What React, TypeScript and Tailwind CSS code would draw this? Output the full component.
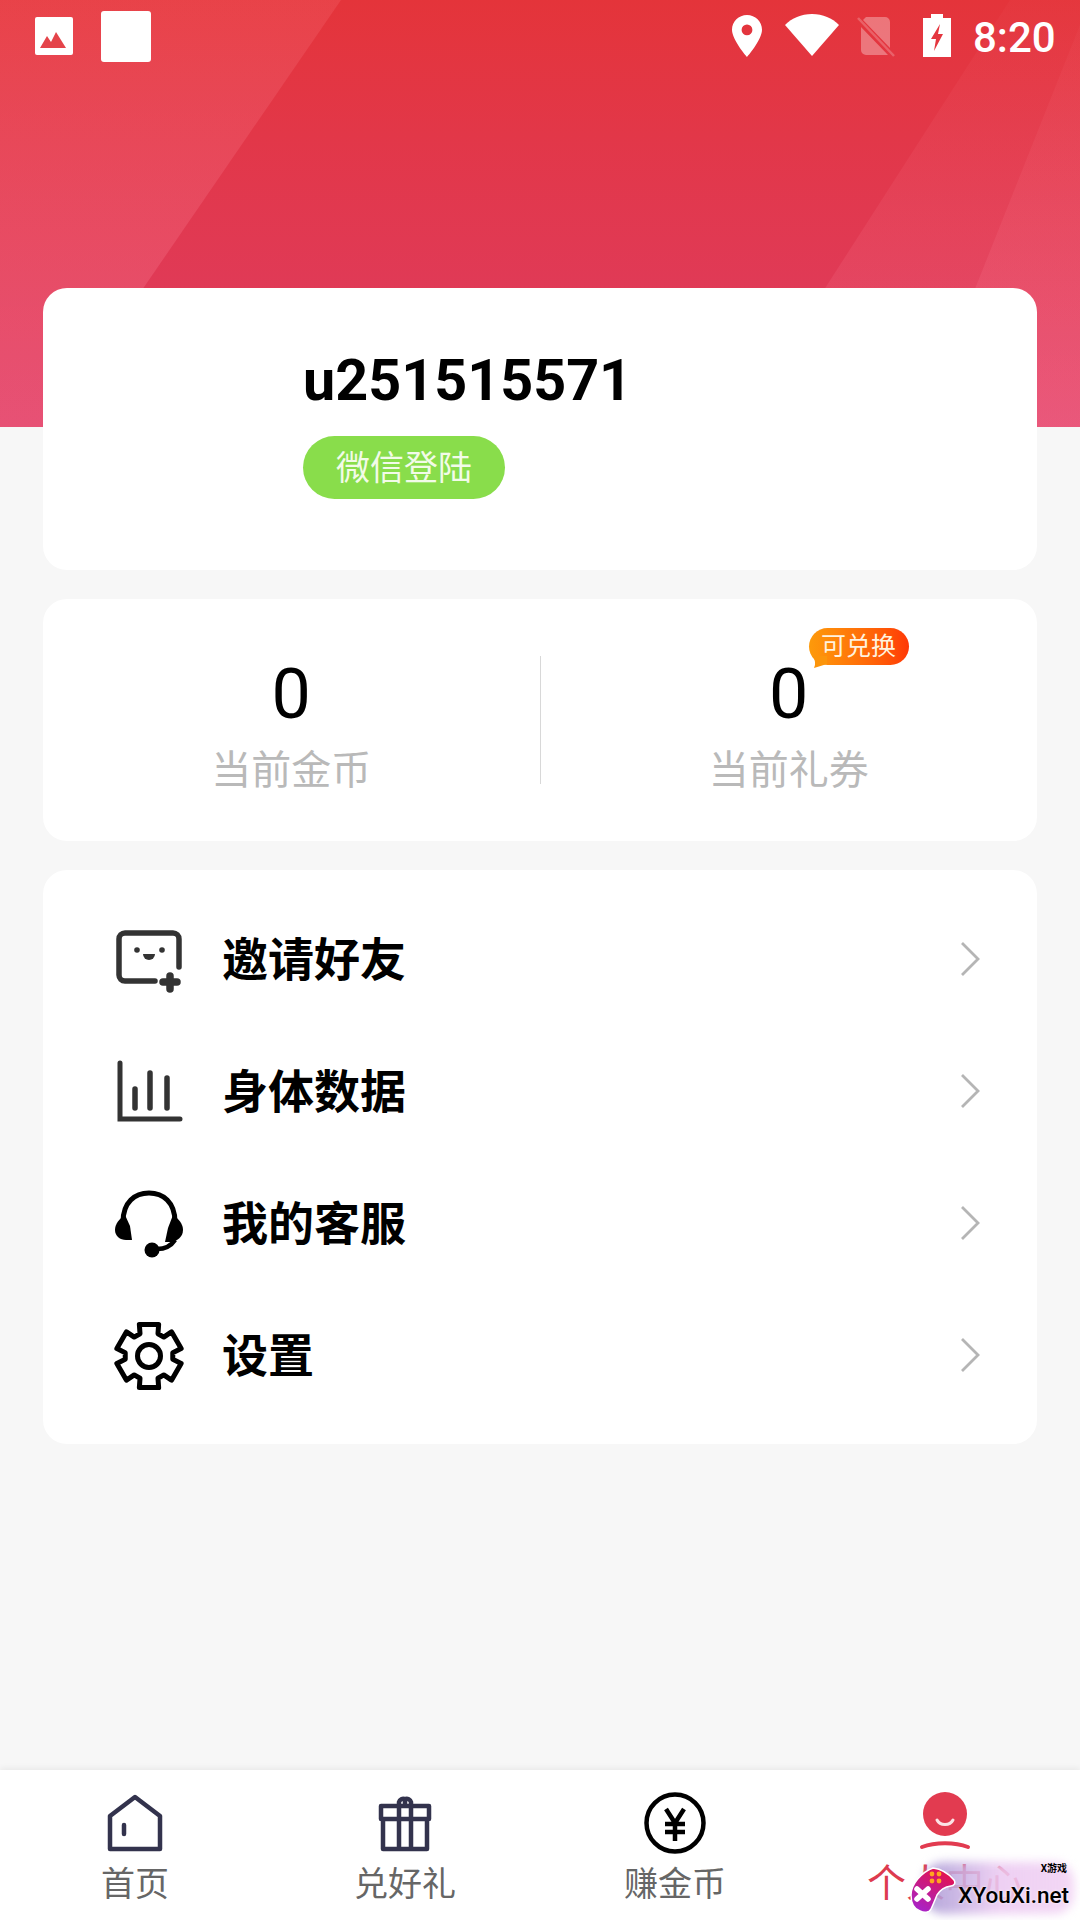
import React from 'react';

const gearPath = () => {
    const pt = (r: number, deg: number) => {
        const a = (deg * Math.PI) / 180;
        return `${(36 + r * Math.cos(a)).toFixed(2)} ${(36 + r * Math.sin(a)).toFixed(2)}`;
    };
    let d = '';
    for (let i = 0; i < 6; i++) {
        const a = i * 60 - 90;
        d += `${i === 0 ? 'M' : 'L'}${pt(24, a - 22)} L${pt(33, a - 17)} L${pt(33, a + 17)} L${pt(24, a + 22)} `;
    }
    return d + 'Z';
};

const InviteIcon = () => (
    <svg width="72" height="72" viewBox="0 0 72 72" fill="none">
        <path d="M66 43V15a6 6 0 0 0-6-6H12a6 6 0 0 0-6 6v36a6 6 0 0 0 6 6h30" stroke="#333" strokeWidth="5.5" strokeLinecap="round" />
        <circle cx="24" cy="26" r="2.8" fill="#333" />
        <circle cx="49" cy="26" r="2.8" fill="#333" />
        <path d="M30 30h12a6 6 0 0 1-12 0z" fill="#333" />
        <path d="M57 52v13M50 58h14" stroke="#333" strokeWidth="7.5" strokeLinecap="round" />
    </svg>
);

const ChartIcon = () => (
    <svg width="72" height="72" viewBox="0 0 72 72" fill="none" stroke="#333" strokeLinecap="round">
        <path d="M7 7v56h60" strokeWidth="5" />
        <path d="M22 33v19M37 17v35M54 22v30" strokeWidth="5.5" />
    </svg>
);

const HeadsetIcon = () => (
    <svg width="72" height="72" viewBox="0 0 72 72" fill="none">
        <path d="M10 34C10 14 22 5 36 5s26 9 26 29" stroke="#000" strokeWidth="5" />
        <path d="M12 27c-6 4-10 9-10 15 0 6 5 10 11 10h6l-2-14z" fill="#000" />
        <path d="M60 27c6 4 10 9 10 15 0 7-6 11-11 12h-7l3-14z" fill="#000" />
        <path d="M44 61c8 0 14-3 18-9" stroke="#000" strokeWidth="4.5" />
        <circle cx="39" cy="62" r="7.5" fill="#000" />
    </svg>
);

const GearIcon = () => (
    <svg width="72" height="72" viewBox="0 0 72 72" fill="none" stroke="#000">
        <path d={gearPath()} strokeWidth="5" strokeLinejoin="round" />
        <circle cx="36" cy="36" r="11.5" strokeWidth="5" />
    </svg>
);

const Chevron = () => (
    <svg width="20" height="36" viewBox="0 0 20 36" fill="none" className="ml-auto -mt-[2px]">
        <path d="M2 2l16 16L2 34" stroke="#b5b5b5" strokeWidth="2.8" />
    </svg>
);

const menu = [
    { label: '邀请好友', icon: <InviteIcon /> },
    { label: '身体数据', icon: <ChartIcon /> },
    { label: '我的客服', icon: <HeadsetIcon /> },
    { label: '设置', icon: <GearIcon /> },
];

const StatusBar = () => (
    <div className="relative flex h-[72px] items-start">
        <svg width="38" height="38" viewBox="0 0 38 38" className="ml-[35px] mt-[17px]">
            <rect width="38" height="38" rx="2" fill="#fff" />
            <path d="M5 31l7-12 4 6 5-10 10 16z" fill="#e4444a" />
        </svg>
        <div className="ml-[28px] mt-[11px] h-[51px] w-[50px] rounded-[3px] bg-white" />
        <svg width="30" height="42" viewBox="0 0 30 42" className="ml-[581px] mt-[15px]">
            <path fillRule="evenodd" d="M15 0c8.3 0 15 6.6 15 14.8C30 25 15 42 15 42S0 25 0 14.8C0 6.6 6.7 0 15 0zm0 9.5a5.4 5.4 0 1 0 0 10.8 5.4 5.4 0 0 0 0-10.8z" fill="#fff" />
        </svg>
        <svg width="54" height="42" viewBox="0 0 54 42" className="ml-[23px] mt-[14px]">
            <path d="M27 42L0 11C7 4 16 0 27 0s20 4 27 11z" fill="#fff" />
        </svg>
        <svg width="40" height="42" viewBox="0 0 40 42" className="ml-[18px] mt-[15px]">
            <path d="M9 2h19a5 5 0 0 1 5 5v26L6 5l3-3zM4 12l27 28H9a5 5 0 0 1-5-5z" fill="#fff" fillOpacity="0.32" />
            <path d="M1 3l36 38" stroke="#fff" strokeOpacity="0.22" strokeWidth="2.5" />
        </svg>
        <svg width="28" height="43" viewBox="0 0 28 43" className="ml-[26px] mt-[14px]">
            <path d="M8 0h12v4h8v39H0V4h8z" fill="#fff" />
            <path d="M17 10l-9 15h5l-2 12 9-17h-5z" fill="#e4363f" />
        </svg>
        <span className="ml-[22px] mt-[13px] text-[42px] font-medium leading-[50px] text-white">8:20</span>
    </div>
);

const Tab = ({ label, icon, active }: { label: string; icon: React.ReactNode; active?: boolean }) => (
    <div className="flex flex-1 flex-col items-center">
        <div className="flex h-[66px] items-center">{icon}</div>
        <span className={active ? 'mt-[6px] text-[39px] leading-[44px] text-[#dd3b4f]' : 'mt-[6px] text-[34px] leading-[44px] text-[#666]'}>{label}</span>
    </div>
);

const Watermark = () => (
    <div className="absolute bottom-[4px] right-[4px] h-[56px] w-[166px]">
        <div className="absolute bottom-[2px] left-[14px] right-[2px] top-[2px] rounded-[20px] bg-linear-to-r from-[#a596d2]/85 via-[#eccbf2]/90 to-[#f0cdf2]/80 blur-[5px]" />
        <svg width="46" height="46" viewBox="0 0 46 46" className="absolute left-0 top-[7px]">
            <defs>
                <linearGradient id="wm" x1="0.7" y1="0" x2="0.2" y2="1">
                    <stop offset="0" stopColor="#e5124a" />
                    <stop offset="1" stopColor="#a624cc" />
                </linearGradient>
            </defs>
            <path d="M23 1c8 1 16 6 21 12 2 3 0 6-3 6-7 1-11 4-14 9-2 5-4 10-6 14-2 4-7 4-11 2C4 42 1 36 1 28 1 17 12 5 23 1z" fill="url(#wm)" stroke="#fff" strokeWidth="1.5" />
            <path d="M7 22l11 10M18 22L7 32" stroke="#fff" strokeWidth="5.5" strokeLinecap="round" />
            <circle cx="22" cy="7" r="2.4" fill="#ffa51f" />
            <circle cx="29" cy="7" r="2.4" fill="#ffa51f" />
            <circle cx="22" cy="14" r="2.4" fill="#ffa51f" />
            <circle cx="29" cy="14" r="2.4" fill="#ffa51f" />
        </svg>
        <span className="absolute right-[9px] top-[3px] text-[10px] font-bold leading-[12px] text-black">X游戏</span>
        <span className="absolute right-[7px] top-[21px] text-[22.5px] font-medium leading-[28px] text-black [text-shadow:0_0_3px_#fff]">XYouXi.net</span>
    </div>
);

const App = () => {
    return (
        <div className="relative flex h-[1920px] w-[1080px] flex-col overflow-hidden bg-[#f7f7f7] font-['Roboto','Noto_Sans_CJK_SC',sans-serif]">
            <div className="relative h-[427px] shrink-0 bg-linear-to-b from-[#e4343a] to-[#de3c62]">
                <svg width="1080" height="427" viewBox="0 0 1080 427" className="absolute inset-0">
                    <defs>
                        <linearGradient id="left" x1="0" y1="0" x2="0" y2="1">
                            <stop offset="0" stopColor="#ff8a90" stopOpacity="0.17" />
                            <stop offset="1" stopColor="#ff8aa8" stopOpacity="0.27" />
                        </linearGradient>
                        <linearGradient id="right" x1="0" y1="0" x2="0" y2="1">
                            <stop offset="0" stopColor="#ff8a90" stopOpacity="0.04" />
                            <stop offset="1" stopColor="#ff8aa8" stopOpacity="0.2" />
                        </linearGradient>
                    </defs>
                    <path d="M0 0H341L48 427H0z" fill="url(#left)" />
                    <path d="M1010 0H1080V427H736z" fill="url(#right)" />
                    <path d="M1090 0H1080V427H920z" fill="url(#right)" />
                </svg>
                <StatusBar />
            </div>

            <div className="relative mt-[-139px] flex flex-col gap-[29px] px-[43px]">
                <div className="flex h-[282px] flex-col items-start rounded-[24px] bg-white pl-[260px] pt-[60px]">
                    <div className="text-[57.5px] font-bold leading-[66px] text-black">u251515571</div>
                    <div className="mt-[22px] flex h-[63px] w-[202px] items-center justify-center rounded-full bg-[#89dd4b] text-[34px] leading-none text-[#f2fbe8]">微信登陆</div>
                </div>

                <div className="flex h-[242px] items-center rounded-[24px] bg-white pt-[6px]">
                    <div className="flex flex-1 flex-col items-center">
                        <div className="text-[70px] leading-[82px] text-black">0</div>
                        <div className="mt-[13px] text-[40px] leading-[46px] text-[#b9b9b9]">当前金币</div>
                    </div>
                    <div className="-mt-[6px] h-[128px] w-px bg-[#d8d8d8]" />
                    <div className="relative flex flex-1 flex-col items-center">
                        <div className="text-[70px] leading-[82px] text-black">0</div>
                        <div className="mt-[13px] text-[40px] leading-[46px] text-[#b9b9b9]">当前礼券</div>
                        <div className="absolute left-[268px] top-[-25px] flex h-[37px] w-[100px] items-center justify-center rounded-full bg-linear-to-r from-[#fd9a0b] to-[#ff3706] text-[25px] leading-none text-[#fff2de]">
                            可兑换
                            <svg width="14" height="12" viewBox="0 0 14 12" className="absolute bottom-[-3px] left-[4px]">
                                <path d="M0 0h14v8L1 12c2-4 1-8-1-12z" fill="#fc950b" />
                            </svg>
                        </div>
                    </div>
                </div>

                <div className="flex flex-col rounded-[24px] bg-white pb-[22px] pl-[70px] pr-[57px] pt-[24px]">
                    {menu.map((item) => (
                        <div key={item.label} className="flex h-[132px] items-center">
                            {item.icon}
                            <span className="ml-[37px] text-[46px] font-bold leading-none text-black">{item.label}</span>
                            <Chevron />
                        </div>
                    ))}
                </div>
            </div>

            <div className="mt-auto flex h-[150px] items-start bg-white pt-[20px] shadow-[0_-2px_6px_rgba(0,0,0,0.06)]">
                <Tab
                    label="首页"
                    icon={
                        <svg width="56" height="58" viewBox="0 0 56 58" fill="none" stroke="#33334d" strokeWidth="4.5" strokeLinejoin="round" strokeLinecap="round">
                            <path d="M28 3L3 22v33h50V22z" />
                            <path d="M17 31v9" />
                        </svg>
                    }
                />
                <Tab
                    label="兑好礼"
                    icon={
                        <svg width="58" height="58" viewBox="0 0 58 58" fill="none" stroke="#33334d" strokeWidth="4.5" strokeLinejoin="round">
                            <path d="M5 25V12h48v13zM7 25h44v30H7zM23 12v43M35 12v43" />
                            <path d="M23 12V8a4.5 4.5 0 0 1 6 -3 4.5 4.5 0 0 1 6 3v4M29 5v7" />
                        </svg>
                    }
                />
                <Tab
                    label="赚金币"
                    icon={
                        <svg width="64" height="64" viewBox="0 0 64 64" fill="none" stroke="#000">
                            <circle cx="32" cy="32" r="28.5" strokeWidth="4.5" />
                            <path d="M23 18l9 14 9-14M22 33h20M22 41h20M32 32v18" strokeWidth="4.5" />
                        </svg>
                    }
                />
                <Tab
                    label="个人中心"
                    active
                    icon={
                        <svg width="52" height="62" viewBox="0 0 52 62" fill="none" className="-mt-[4px]">
                            <circle cx="26" cy="24" r="22" fill="#e23b50" />
                            <path d="M18 30c3 6 13 6 16 0" stroke="#fbe3e5" strokeWidth="3" strokeLinecap="round" />
                            <path d="M3 57c13-5 33-5 46 0" stroke="#e23b50" strokeWidth="4" strokeLinecap="round" />
                        </svg>
                    }
                />
            </div>
            <Watermark />
        </div>
    );
};

export default App;
